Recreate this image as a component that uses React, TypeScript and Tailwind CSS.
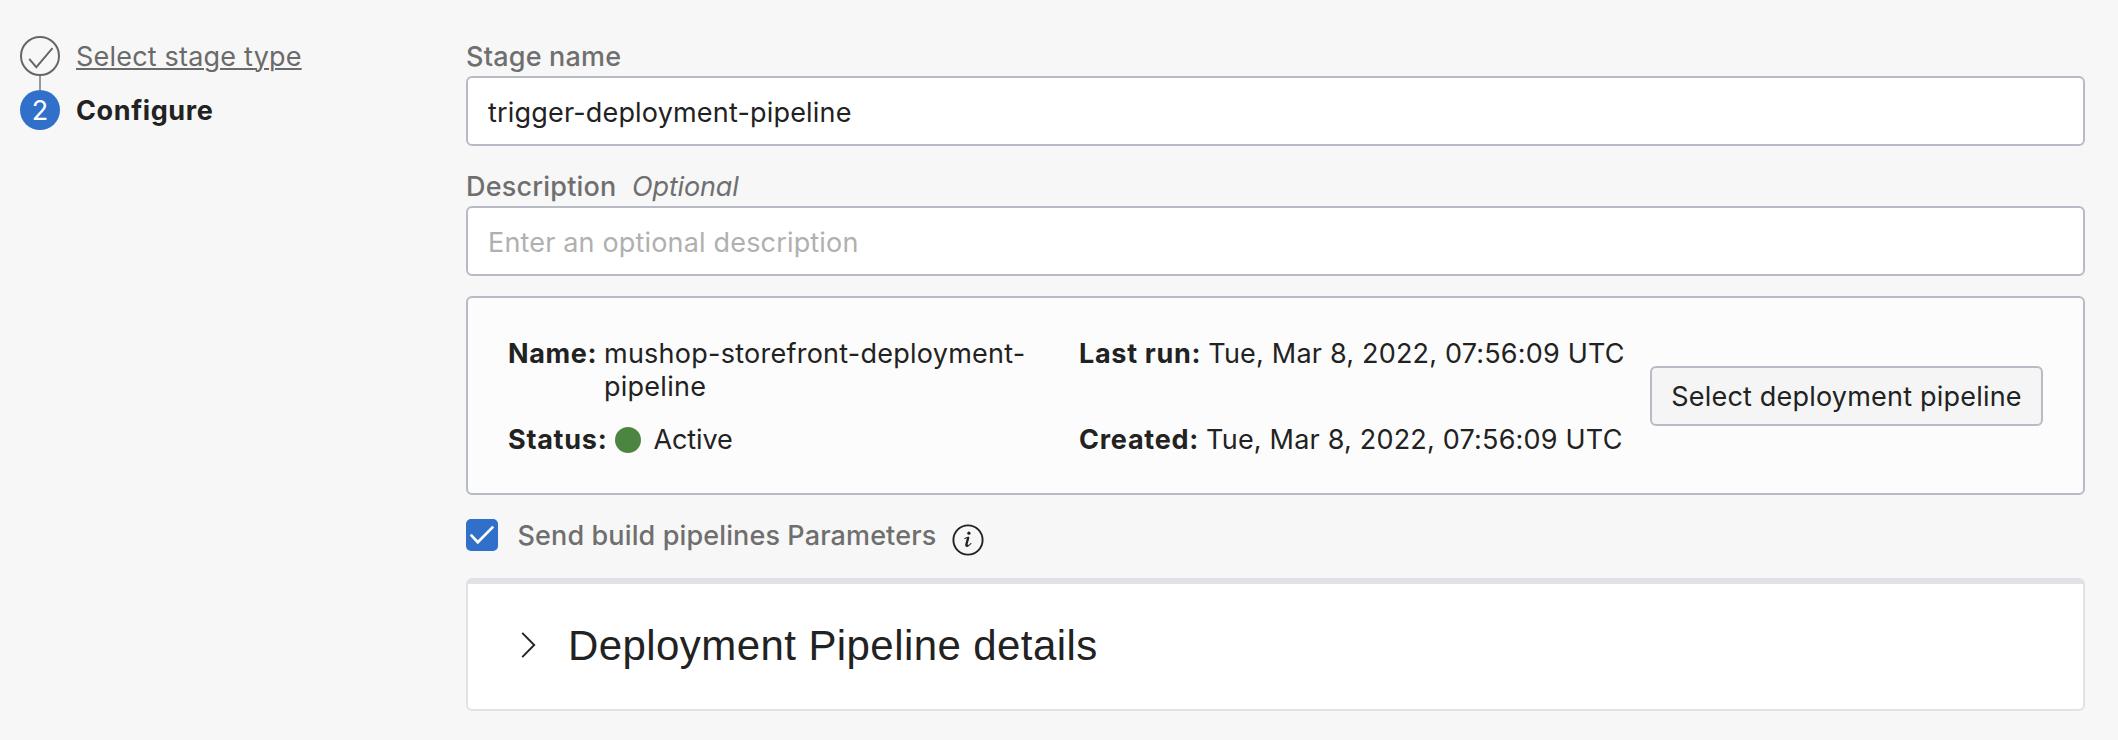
import type { ReactNode } from "react";

function Field({ label, hint, children }: { label: string; hint?: string; children: ReactNode }) {
  return (
    <div>
      <div className="flex h-9 items-start">
        <span className="font-medium text-[#6f6f6f]">{label}</span>
        {hint && <span className="ml-[15.5px] italic tracking-[-0.15px] text-[#6f6f6f]">{hint}</span>}
      </div>
      <div className="flex h-[70px] items-center rounded-[6px] border-2 border-[#b7bbc3] bg-white pl-5 pt-0.5">
        {children}
      </div>
    </div>
  );
}

function CircleCheck() {
  return (
    <svg className="size-10" viewBox="0 0 40 40" fill="none" stroke="#666" strokeWidth="2">
      <circle cx="20" cy="20" r="19" />
      <path d="M9.2 22.8 16.3 31.2 32.5 12.2" strokeWidth="1.9" />
    </svg>
  );
}

function InfoIcon() {
  return (
    <svg className="ml-4 mt-[5px] size-8" viewBox="0 0 32 32" fill="none" stroke="#222" strokeLinecap="round" strokeLinejoin="round">
      <circle cx="16" cy="16" r="14.6" strokeWidth="1.9" />
      <circle cx="16.9" cy="9.2" r="1.6" fill="#222" stroke="none" />
      <path d="M12.9 14.6C13.8 13.9 14.8 13.5 16.4 13.4" strokeWidth="1.1" />
      <path d="M16.2 13.9 14.4 20.2C14.1 21.4 14.6 21.9 15.4 21.7" strokeWidth="2.3" />
      <path d="M15.4 21.9C17 21.6 18 20.8 18.9 19.5" strokeWidth="1.1" />
    </svg>
  );
}

export default function App() {
  return (
    <div className="flex h-[740px] w-[2118px] bg-[#f7f7f7] font-['Inter',sans-serif] text-[27px] leading-[33px] tracking-[0.2px] text-[#222]">
      <nav className="flex w-[466px] flex-col pl-5 pt-9">
        <div className="flex items-center gap-4">
          <CircleCheck />
          <a className="text-[#6a6a6a] underline decoration-2 underline-offset-2">Select stage type</a>
        </div>
        <div className="ml-[19px] h-3.5 w-0.5 bg-[#999]" />
        <div className="flex items-center gap-4">
          <span className="flex size-10 items-center justify-center rounded-full bg-[#3070ca] text-white">2</span>
          <span className="font-bold tracking-[0.6px]">Configure</span>
        </div>
      </nav>

      <main className="w-[1619px] pt-10">
        <div className="flex flex-col gap-6">
          <Field label="Stage name">
            <span className="tracking-[0.18px]">trigger-deployment-pipeline</span>
          </Field>
          <Field label="Description" hint="Optional">
            <span className="tracking-[0.17px] text-[#b0b0b0]">Enter an optional description</span>
          </Field>
        </div>

        <section className="mt-5 flex h-[199px] rounded-[6px] border-2 border-[#b7bbc3] bg-[#fcfcfc] pl-10 pr-10 pt-[39px]">
          <div className="flex w-[571px] flex-col gap-5">
            <div className="flex gap-[7px]">
              <span className="font-bold tracking-[0.6px]">Name:</span>
              <span className="whitespace-nowrap tracking-[0.25px]">mushop-storefront-deployment-<br />pipeline</span>
            </div>
            <div className="flex">
              <span className="font-bold tracking-[0.75px]">Status:</span>
              <span className="ml-2 mt-1 size-[26px] rounded-full bg-[#4c8541]" />
              <span className="ml-3 tracking-[-0.1px]">Active</span>
            </div>
          </div>
          <div className="flex w-[571px] flex-col gap-[53px]">
            <div className="flex">
              <span className="mr-[7px] font-bold tracking-[0.7px]">Last run:</span>
              <span>Tue, Mar 8, 2022, 07:56:09 UTC</span>
            </div>
            <div className="flex">
              <span className="mr-[7px] font-bold tracking-[0.75px]">Created:</span>
              <span>Tue, Mar 8, 2022, 07:56:09 UTC</span>
            </div>
          </div>
          <button className="mt-[29px] flex h-[60px] w-[393px] items-center justify-center whitespace-nowrap rounded-[6px] border-2 border-[#b7bbc3] bg-[#f5f5f5]">
            Select deployment pipeline
          </button>
        </section>

        <div className="mt-6 flex h-[33px] items-start">
          <span className="flex size-8 items-center justify-center rounded-[5px] bg-[#3070ca]">
            <svg className="size-8" viewBox="0 0 32 32" fill="none" stroke="#fff" strokeWidth="2.7">
              <path d="M4.7 15.6 11.8 23.2 27.2 7.6" />
            </svg>
          </span>
          <span className="ml-[19.5px] font-medium tracking-[0.12px] text-[#6f6f6f]">Send build pipelines Parameters</span>
          <InfoIcon />
        </div>

        <section className="mt-[26px] flex h-[133px] items-center rounded-[6px] border-2 border-t-[6px] border-[#e0e2e7] bg-white pb-0.5 pl-[53px]">
          <svg className="mb-0.5 h-[26px] w-4" viewBox="0 0 16 26" fill="none" stroke="#222" strokeWidth="1.9">
            <path d="M1.2 .8 13.2 13 1.2 25.2" />
          </svg>
          <h2 className="ml-[31px] font-['Liberation_Sans',sans-serif] text-[42px] leading-[48px] tracking-[0.42px]">Deployment Pipeline details</h2>
        </section>
      </main>
    </div>
  );
}
